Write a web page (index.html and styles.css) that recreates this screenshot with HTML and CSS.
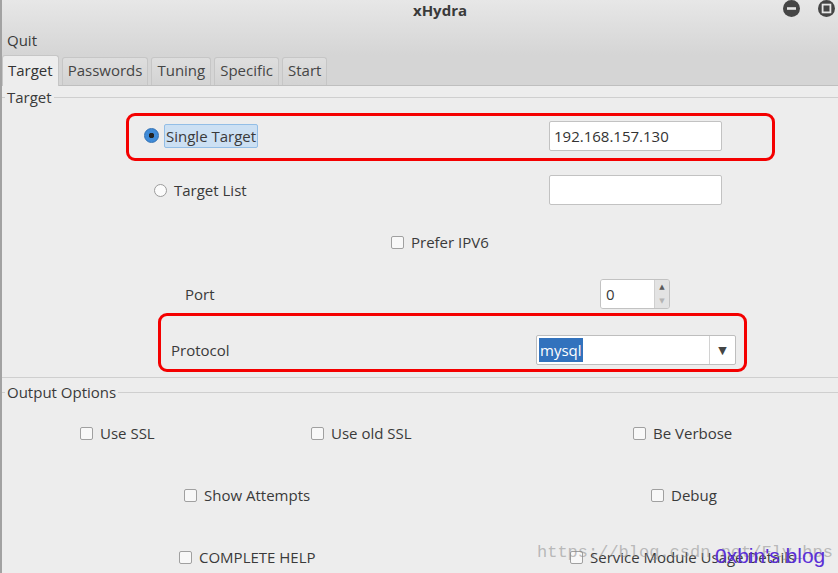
FILE: index.html
```html
<!DOCTYPE html>
<html>
<head>
  <meta charset="UTF-8">
  <title>xHydra</title>
  <meta name="viewport" content="width=device-width, initial-scale=1.0"/>
  <link rel="stylesheet" href="styles.css">
</head>
<body>
  <div class="window">
    <div class="header">
      <div class="titlebar">
        <span></span>
        <span class="title">xHydra</span>
        <span class="wm-buttons">
          <svg width="17" height="17" viewBox="0 0 17 17"><circle cx="8.5" cy="8.5" r="8.5" fill="#454545"/><rect x="4" y="7.2" width="9" height="2.6" fill="#e6e6e6"/></svg>
          <svg width="17" height="17" viewBox="0 0 17 17"><circle cx="8.5" cy="8.5" r="8.5" fill="#454545"/><rect x="4.6" y="4.6" width="7.8" height="7.8" fill="none" stroke="#e6e6e6" stroke-width="1.8"/></svg>
        </span>
      </div>
      <div class="menubar">Quit</div>
      <div class="tabs">
        <span class="tab active">Target</span>
        <span class="tab">Passwords</span>
        <span class="tab">Tuning</span>
        <span class="tab">Specific</span>
        <span class="tab">Start</span>
      </div>
    </div>

    <div class="page">
      <fieldset class="frame target-frame">
        <legend>Target</legend>

        <div class="mark mark-single">
          <span class="radio checked"></span>
          <span class="label focus">Single Target</span>
          <span class="entry">192.168.157.130</span>
        </div>

        <div class="row row-list">
          <span class="radio"></span>
          <span class="label">Target List</span>
          <span class="entry"></span>
        </div>

        <div class="row row-ipv6">
          <span class="check"></span>
          <span>Prefer IPV6</span>
        </div>

        <div class="row row-port">
          <span>Port</span>
          <span class="spin">
            <span class="spin-entry">0</span>
            <span class="spin-buttons"><span class="up">&#9650;</span><span class="down">&#9660;</span></span>
          </span>
        </div>

        <div class="mark mark-protocol">
          <span>Protocol</span>
          <span class="combo">
            <span class="combo-text"><span class="selected">mysql</span></span>
            <span class="combo-arrow">&#9660;</span>
          </span>
        </div>
      </fieldset>

      <fieldset class="frame output-frame">
        <legend>Output Options</legend>

        <div class="opts opts-1">
          <span class="opt"><span class="check"></span>Use SSL</span>
          <span class="opt"><span class="check"></span>Use old SSL</span>
          <span class="opt"><span class="check"></span>Be Verbose</span>
        </div>
        <div class="opts opts-2">
          <span class="opt"><span class="check"></span>Show Attempts</span>
          <span class="opt"><span class="check"></span>Debug</span>
        </div>
        <div class="opts opts-3">
          <span class="opt"><span class="check"></span>COMPLETE HELP</span>
          <span class="opt"><span class="check"></span>Service Module Usage Details</span>
        </div>
      </fieldset>

      <div class="watermark">https://blog.csdn.net/Fly_hps</div>
      <div class="blogname">0xbin's blog</div>
    </div>
  </div>
</body>
</html>
```

FILE: styles.css
```css
body { margin: 0; width: 838px; height: 573px; overflow: hidden; font-family: "Open Sans", "DejaVu Sans", sans-serif; font-size: 15px; color: #3a3a3a; background: #ededed; }
.window { height: 573px; border-left: 2px solid #a2a2a2; }

.header { background: linear-gradient(#e7e7e7, #d5d5d5 55px); }
.titlebar { height: 20px; display: grid; grid-template-columns: 1fr auto 1fr; align-items: center; }
.title { font-weight: bold; padding-left: 40px; line-height: 20px; color: #3a3a3a; }
.wm-buttons { display: flex; justify-content: flex-end; gap: 18px; padding-right: 3px; margin-top: -3px; }

.menubar { height: 20px; line-height: 20px; padding: 10px 0 5px 5px; }

.tabs { height: 31px; box-sizing: border-box; display: flex; align-items: flex-end; gap: 3px; border-bottom: 1px solid #bfbfbf; }
.tab { height: 28px; box-sizing: border-box; line-height: 24px; padding: 0 5px 3px; border: 1px solid #c6c6c6; border-bottom: none; border-radius: 3px 3px 0 0; background: linear-gradient(#dedede, #d3d3d3); color: #454545; }
.tab.active { height: 31px; margin-bottom: -1px; padding: 2px 5px 4px; background: #ededed; color: #333; }

.page { position: relative; background: #ededed; }

.frame { margin: 0; padding: 0; border: 0; border-top: 1px solid #cfcfcf; min-inline-size: 0; }
.frame legend { margin-left: 3px; padding: 0 2px; line-height: 20px; }
.target-frame { margin-top: 1px; padding-bottom: 5px; border-bottom: 1px solid #cfcfcf; }
.output-frame { margin-top: 4px; }

.row { display: flex; align-items: center; }
.mark { display: flex; align-items: center; box-sizing: border-box; border: 3px solid #f40000; border-radius: 9px; }
.mark-single { margin: 6px 0 0 124px; width: 649px; height: 48px; padding: 0 50px 3px 15px; }
.mark-protocol { margin: 4px 0 0 156px; width: 589px; height: 59px; padding: 14px 8px 0 10px; }

.row-list { margin-top: 14px; height: 30px; padding: 0 116px 0 152px; }
.row-ipv6 { margin-top: 27px; height: 20px; padding-left: 389px; }
.row-port { margin-top: 27px; height: 30px; padding-left: 183px; }

.radio { width: 11px; height: 11px; border: 1px solid #9c9c9c; border-radius: 50%; background: #fbfbfb; }
.radio.checked { width: 13px; height: 13px; border: 1px solid #2f6fb3; background: radial-gradient(circle, #222 0 2.5px, #3f8bd8 3px); }
.label { margin-left: 7px; }
.label.focus { margin-left: 5px; padding: 0 1px; line-height: 22px; background: #cce0f3; border: 1px solid #93bee6; border-radius: 2px; }

.check { display: inline-block; width: 11px; height: 11px; border: 1px solid #a0a0a0; border-radius: 2px; background: #f8f8f8; margin-right: 7px; flex: none; }

.entry { margin-left: auto; width: 173px; height: 30px; box-sizing: border-box; border: 1px solid #c2c2c2; border-radius: 2px; background: #fff; line-height: 28px; padding-left: 4px; color: #333; }

.spin { margin-left: auto; margin-right: 168px; display: flex; height: 30px; box-sizing: border-box; border: 1px solid #c2c2c2; border-radius: 3px; overflow: hidden; }
.spin-entry { width: 54px; background: #fff; line-height: 28px; padding-left: 5px; box-sizing: border-box; border-right: 1px solid #d0d0d0; }
.spin-buttons { width: 14px; background: #e3e3e3; display: flex; flex-direction: column; align-items: center; font-size: 7px; line-height: 14px; }
.spin-buttons .up { color: #5a5a5a; }
.spin-buttons .down { color: #b4b4b4; }

.combo { margin-left: auto; display: flex; width: 200px; height: 30px; box-sizing: border-box; border: 1px solid #bebebe; border-radius: 2px; background: #fff; }
.combo-text { flex: 1; display: flex; align-items: center; padding-left: 2px; border-right: 1px solid #d2d2d2; }
.selected { background: #3272bd; color: #fff; line-height: 24px; padding: 0 1px; }
.combo-arrow { width: 25px; text-align: center; line-height: 28px; font-size: 11px; color: #444; }

.opts { display: grid; align-items: center; height: 20px; }
.opt { display: flex; align-items: center; white-space: nowrap; }
.opts-1 { margin-top: 21px; padding-left: 78px; grid-template-columns: 231px 322px auto; }
.opts-2 { margin-top: 42px; padding-left: 182px; grid-template-columns: 467px auto; }
.opts-3 { margin-top: 42px; padding-left: 177px; grid-template-columns: 391px auto; }

.watermark { position: absolute; left: 535px; top: 456px; font-family: "Liberation Mono", monospace; font-size: 17px; color: rgba(140, 140, 140, 0.55); white-space: nowrap; }
.blogname { position: absolute; left: 713px; top: 457px; font-family: "Liberation Sans", Arial, sans-serif; font-size: 21px; color: #5b2fd6; white-space: nowrap; }
```
